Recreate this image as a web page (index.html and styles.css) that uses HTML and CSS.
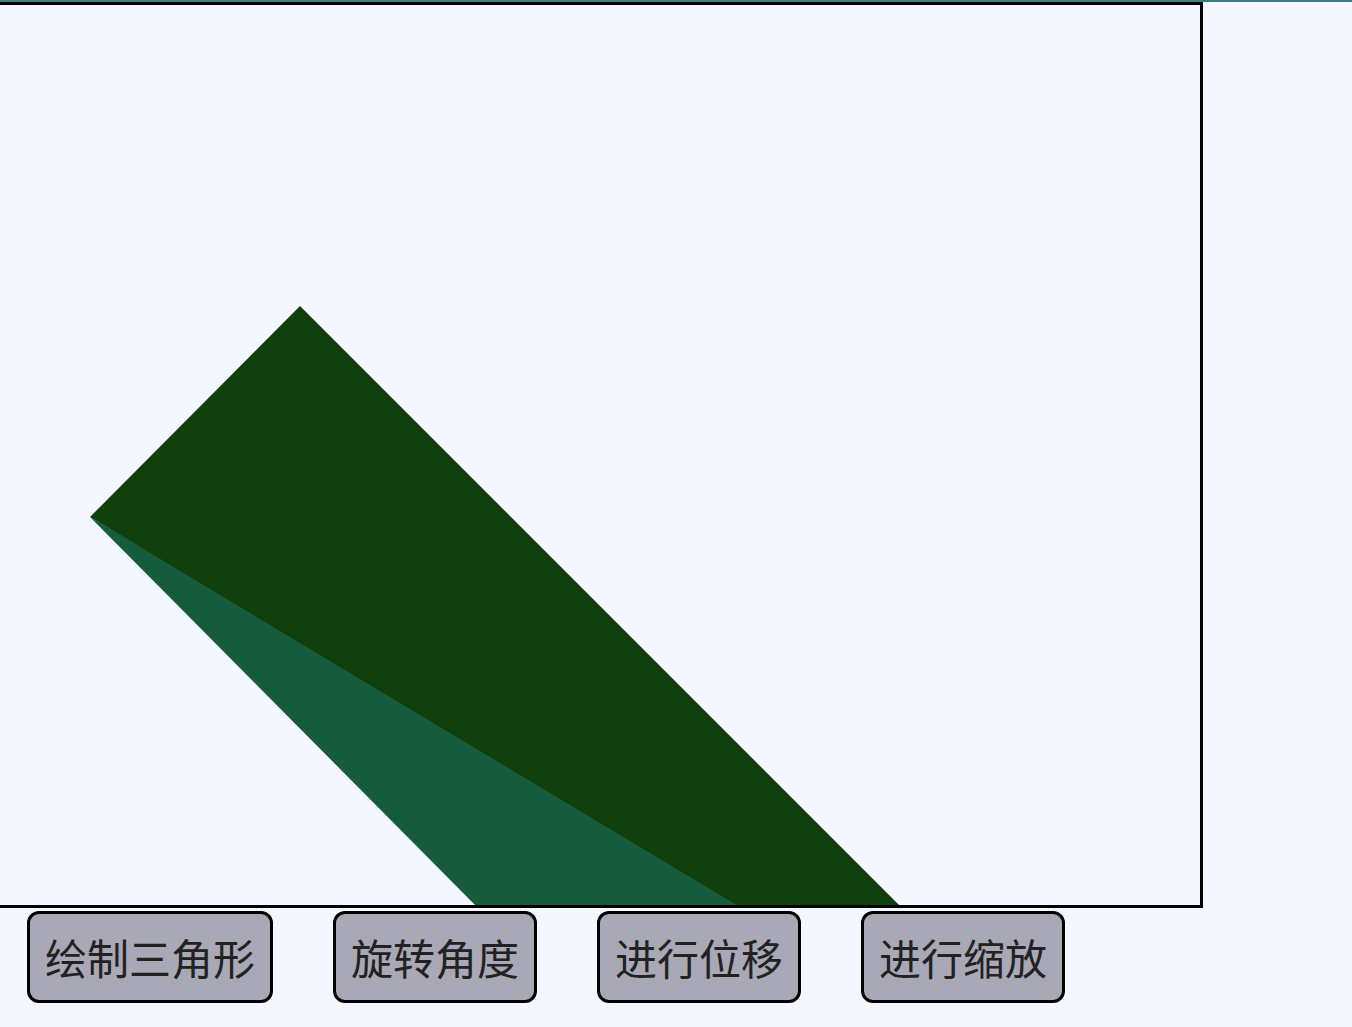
FILE: index.html
```html
<!DOCTYPE html>
<html lang="zh">
<head>
<meta charset="utf-8">
<title>WebGL 三角形</title>
<link rel="stylesheet" href="styles.css">
</head>
<body>
<div class="topline"></div>
<div class="stage">
  <svg class="scene" width="1200" height="900" viewBox="0 5 1200 900" xmlns="http://www.w3.org/2000/svg">
    <polygon points="90,517 1142.5,1138 610,1041" fill="#165c3c"/>
    <polygon points="300,306 90,517 1142.5,1148.5" fill="#0f3f0a"/>
  </svg>
</div>
<div class="controls">
  <button class="btn">绘制三角形</button>
  <button class="btn">旋转角度</button>
  <button class="btn">进行位移</button>
  <button class="btn">进行缩放</button>
</div>
</body>
</html>
```

FILE: styles.css
```css
html, body {
  margin: 0;
  padding: 0;
  background: #f4f7ff;
  overflow: hidden;
  height: 100%;
}
body {
  font-family: "Noto Sans CJK SC", "Noto Sans", sans-serif;
}
.topline {
  height: 2px;
  background: #3a7c80;
}
.stage {
  width: 1200px;
  height: 900px;
  border: 3px solid #000;
  margin-left: -3px;
  overflow: hidden;
  background: #f4f7ff;
}
.scene {
  display: block;
}
.controls {
  display: flex;
  gap: 60px;
  padding-left: 27px;
  margin-top: 3px;
}
.btn {
  font-family: "Noto Sans CJK SC", "Noto Sans", sans-serif;
  font-size: 42px;
  line-height: 62px;
  color: #222;
  background: #a8a8b6;
  border: 3px solid #000;
  border-radius: 12px;
  padding: 12px 15px;
  margin: 0;
}
```
